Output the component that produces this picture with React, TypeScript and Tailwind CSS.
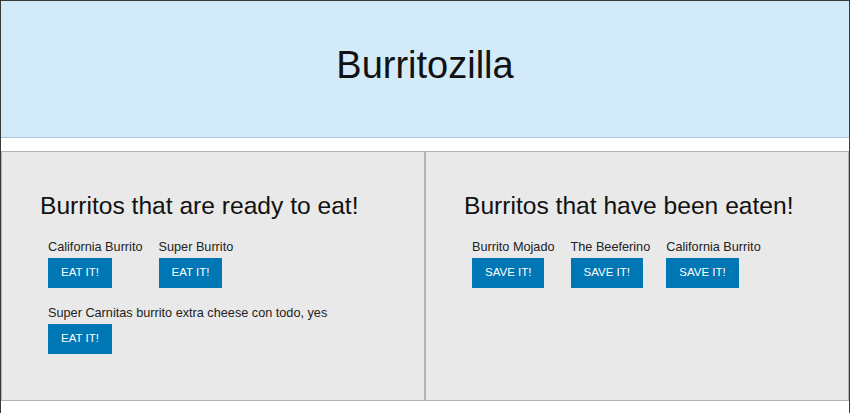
const ready = ["California Burrito", "Super Burrito", "Super Carnitas burrito extra cheese con todo, yes"];
const eaten = ["Burrito Mojado", "The Beeferino", "California Burrito"];

function BurritoList({ title, items, action }: { title: string; items: string[]; action: string }) {
  return (
    <div className="flex-1 bg-[#e9e9e9] border border-[#b3b3b3] pt-[40px] pl-[38px] pr-4 pb-[46px]">
      <h2 className="text-[24.6px] leading-[28px] text-[#111] mb-[20px]">{title}</h2>
      <ul className="flex flex-wrap gap-x-4 gap-y-[18px] ml-2">
        {items.map((item, i) => (
          <li key={i} className="flex flex-col items-start">
            <span className="text-[12.7px] leading-[15px] text-[#222]">{item}</span>
            <button className="mt-[3px] h-[30px] px-[13px] bg-[#0077b5] text-white text-[11.5px] uppercase">
              {action}
            </button>
          </li>
        ))}
      </ul>
    </div>
  );
}

export default function App() {
  return (
    <div className="min-h-[413px] bg-white border-x border-t border-[#3a3a3a] font-['Liberation_Sans',Arial,sans-serif]">
      {/* Header */}
      <div className="h-[137px] bg-[#d3eaf8] border-b border-[#a9c8dc] pt-[42px] flex justify-center">
        <h1 className="text-[38px] leading-[44px] text-[#111]">Burritozilla</h1>
      </div>

      {/* Lists */}
      <div className="flex mt-[13px]">
        <BurritoList title="Burritos that are ready to eat!" items={ready} action="Eat it!" />
        <BurritoList title="Burritos that have been eaten!" items={eaten} action="Save it!" />
      </div>
    </div>
  );
}
